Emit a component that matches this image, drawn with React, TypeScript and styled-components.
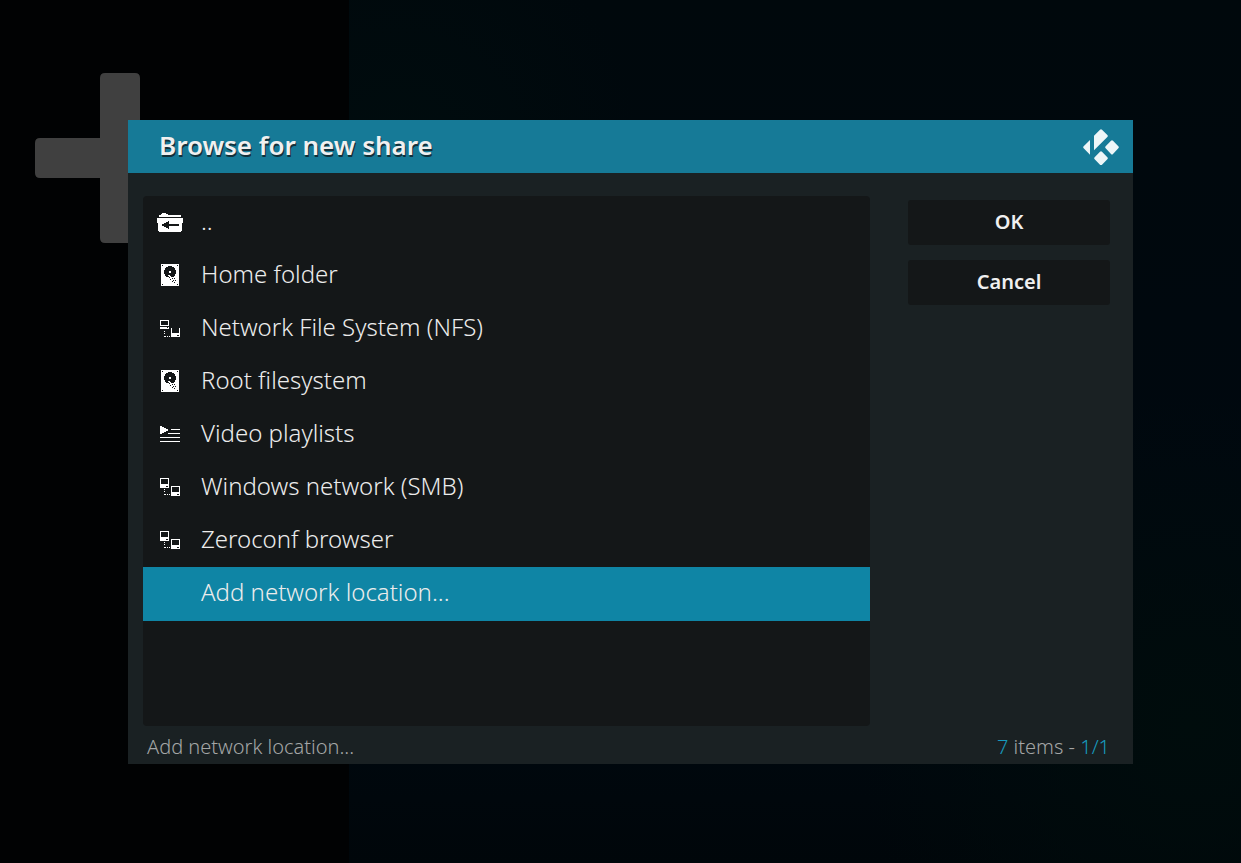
import React from "react";
import styled, { createGlobalStyle } from "styled-components";

const GlobalStyle = createGlobalStyle`
  * { box-sizing: border-box; }
  body {
    margin: 0;
    background: #000203;
    font-family: "Noto Sans", "Open Sans", sans-serif;
    color: #e6e6e6;
  }
`;

const Screen = styled.div`
  position: relative;
  display: flex;
  min-height: 100vh;
  padding: 120px 108px 99px 128px;
  background:
    linear-gradient(to right, #010203 349px, transparent 349px),
    radial-gradient(circle at 32% 18%, #000c0e 0, transparent 22%),
    radial-gradient(circle at 96% 84%, #000c0c 0, transparent 24%),
    linear-gradient(180deg, #00080c 0%, #00080f 55%, #00080e 85%, #00060a 100%);
`;

const Plus = styled.svg`
  position: absolute;
  left: 35px;
  top: 73px;
  width: 170px;
  height: 170px;
`;

const Dialog = styled.section`
  position: relative;
  flex: 1;
  display: flex;
  flex-direction: column;
  background: #1a2123;
`;

const Header = styled.header`
  display: flex;
  align-items: center;
  justify-content: space-between;
  height: 53px;
  padding: 0 14px 0 31px;
  background: #167a97;
`;

const Title = styled.h1`
  margin: 0;
  padding-bottom: 4px;
  font-size: 26px;
  line-height: 48px;
  font-weight: 600;
  color: #f0f0f0;
  text-shadow: 1px 2px 0 #12303a;
`;

const Body = styled.div`
  flex: 1;
  display: flex;
  gap: 38px;
  padding: 23px 23px 0 15px;
`;

const List = styled.ul`
  flex: 1;
  margin: 0;
  padding: 0;
  list-style: none;
  border-radius: 4px;
  background: #141718;
`;

const Row = styled.button<{ $selected?: boolean }>`
  display: flex;
  align-items: center;
  width: 100%;
  height: ${(p) => (p.$selected ? "54px" : "53px")};
  padding: 0 0 ${(p) => (p.$selected ? "2px" : "1px")};
  border: 0;
  font: inherit;
  font-size: 24px;
  font-weight: 300;
  text-align: left;
  color: #ececec;
  background: ${(p) => (p.$selected ? "#0f85a5" : "transparent")};
`;

const IconCell = styled.span`
  display: flex;
  justify-content: center;
  width: 54px;
  margin-right: 4px;
`;

const Label = styled.span`
  padding-bottom: 3px;
`;

const Actions = styled.div`
  display: flex;
  flex-direction: column;
  gap: 15px;
  width: 202px;
  padding-top: 4px;
`;

const Action = styled.button`
  height: 45px;
  padding: 0 0 2px;
  border: 0;
  border-radius: 3px;
  background: #141718;
  color: #f0f0f0;
  font: inherit;
  font-size: 20px;
  font-weight: 600;
`;

const Footer = styled.footer`
  display: flex;
  justify-content: space-between;
  height: 38px;
  padding: 0 23px 0 19px;
  font-size: 20px;
  line-height: 42px;
  font-weight: 300;
  color: #a4a6a6;
`;

const Accent = styled.span`
  color: #1799bd;
`;

const KodiLogo = () => (
  <svg width="36" height="36" viewBox="0 0 108 108" fill="#eef6f8" aria-hidden="true">
    <path d="M33 20 51 2q3-3 6 0l16 16q3 3 0 6L33 64Z" />
    <path d="M21 33V77L2 58q-3-3 0-6Z" />
    <path d="M84 35q3-3 6 0l16 17q3 3 0 6L90 75q-3 3-6 0L68 58q-3-3 0-6Z" />
    <path d="M51 68q3-3 6 0l16 17q3 3 0 6L57 107q-3 3-6 0L35 91q-3-3 0-6Z" />
  </svg>
);

const FolderUpIcon = () => (
  <svg width="26" height="20" viewBox="0 -1 26 20" fill="#fff" shapeRendering="crispEdges" aria-hidden="true">
    <path d="M2 4V2H4V1H5V0H9V1H11V2H24V4Z" />
    <path
      fillRule="evenodd"
      d="M0 5H26V10H25V18H24V19H2V18H1V10H0ZM5 11V13H7V14H9V15H11V16H12V13H22V11H12V8H11V9H9V10H7V11Z"
    />
  </svg>
);

const DiskIcon = () => (
  <svg width="18" height="22" viewBox="0 0 18 22" shapeRendering="crispEdges" aria-hidden="true">
    <path fill="#fff" d="M0 0H18V22H0Z" />
    <path fill="#141718" d="M7 2H11V3H13V4H14V6H15V10H14V12H13V13H11V14H7V13H5V12H4V10H3V6H4V4H5V3H7Z" />
    <path fill="#fff" d="M8 7H10V9H8ZM7 11H9V12H10V13H11V14H7V13H8V12H7Z" />
    <path
      fill="#141718"
      d="M1 1H2V2H1ZM16 1H17V2H16ZM1 20H2V21H1ZM16 20H17V21H16ZM8 13H9V14H8ZM9 15H10V16H9ZM11 14H12V15H11ZM13 14H14V15H13ZM12 16H13V17H12ZM14 16H15V17H14ZM11 17H12V18H11ZM13 18H14V19H13Z"
    />
  </svg>
);

const NetworkIcon = ({ open }: { open?: boolean }) => (
  <svg
    width="20"
    height="18"
    viewBox={open ? "0 -1 20 18" : "0 0 20 18"}
    fill="#fff"
    shapeRendering="crispEdges"
    aria-hidden="true"
  >
    {open ? (
      <>
        <path fillRule="evenodd" d="M0 0H9V6H0ZM1 1V5H8V1Z" />
        <path d="M0 7H9V9H0ZM11 8H12V13H19V8H20V17H11Z" />
        <path fill="#141718" d="M7 7H8V8H7ZM17 15H19V16H17Z" />
      </>
    ) : (
      <>
        <path fillRule="evenodd" d="M0 0H9V10H0ZM1 1V6H8V1ZM11 8H20V18H11ZM12 9V14H19V9Z" />
        <path fill="#141718" d="M6 8H8V9H6ZM17 16H19V17H17Z" />
      </>
    )}
    <path d="M4 11H5V12H4ZM4 13H5V14H4ZM4 16H6V17H4ZM7 16H8V17H7ZM9 16H10V17H9Z" />
  </svg>
);

const PlaylistIcon = () => (
  <svg width="20" height="18" viewBox="0 -1 20 18" fill="#fff" shapeRendering="crispEdges" aria-hidden="true">
    <path d="M0 0H2V1H4V2H6V3H8V5H6V6H4V7H2V8H0Z" />
    <path d="M11 3H20V4H11ZM8 7H20V8H8ZM0 11H20V12H0ZM0 15H20V16H0Z" />
  </svg>
);

const entries: { label: string; icon?: React.ReactNode; selected?: boolean }[] = [
  { label: "..", icon: <FolderUpIcon /> },
  { label: "Home folder", icon: <DiskIcon /> },
  { label: "Network File System (NFS)", icon: <NetworkIcon open /> },
  { label: "Root filesystem", icon: <DiskIcon /> },
  { label: "Video playlists", icon: <PlaylistIcon /> },
  { label: "Windows network (SMB)", icon: <NetworkIcon /> },
  { label: "Zeroconf browser", icon: <NetworkIcon /> },
  { label: "Add network location...", selected: true },
];

export default function App() {
  return (
    <>
      <GlobalStyle />
      <Screen>
        <Plus viewBox="0 0 170 170" aria-hidden="true">
          <path
            fill="#404040"
            d="M70 0h30q5 0 5 5v60h60q5 0 5 5v30q0 5-5 5h-60v60q0 5-5 5h-30q-5 0-5-5v-60h-60q-5 0-5-5v-30q0-5 5-5h60v-60q0-5 5-5Z"
          />
        </Plus>
        <Dialog role="dialog" aria-labelledby="dialog-title">
          <Header>
            <Title id="dialog-title">Browse for new share</Title>
            <KodiLogo />
          </Header>
          <Body>
            <List>
              {entries.map((e) => (
                <li key={e.label}>
                  <Row type="button" $selected={e.selected}>
                    <IconCell>{e.icon}</IconCell>
                    <Label>{e.label}</Label>
                  </Row>
                </li>
              ))}
            </List>
            <Actions>
              <Action type="button">OK</Action>
              <Action type="button">Cancel</Action>
            </Actions>
          </Body>
          <Footer>
            <span>Add network location...</span>
            <span>
              <Accent>7</Accent> items - <Accent>1/1</Accent>
            </span>
          </Footer>
        </Dialog>
      </Screen>
    </>
  );
}
